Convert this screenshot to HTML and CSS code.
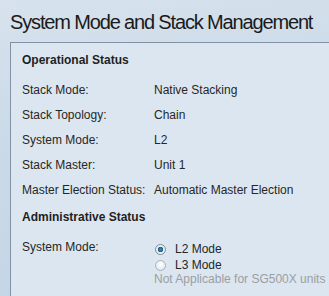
FILE: index.html
```html
<!DOCTYPE html>
<html>
<head>
<meta charset="utf-8">
<link rel="stylesheet" href="styles.css">
</head>
<body>
<div class="page">
  <h1 class="title">System Mode and Stack Management</h1>
  <div class="panel">
    <div class="section-head">Operational Status</div>
    <div class="rows">
      <div class="label">Stack Mode:</div><div class="value">Native Stacking</div>
      <div class="label">Stack Topology:</div><div class="value">Chain</div>
      <div class="label">System Mode:</div><div class="value">L2</div>
      <div class="label">Stack Master:</div><div class="value">Unit 1</div>
      <div class="label">Master Election Status:</div><div class="value">Automatic Master Election</div>
    </div>
    <div class="section-head admin">Administrative Status</div>
    <div class="rows form">
      <div class="label">System Mode:</div>
      <div class="radios">
        <label class="radio-line"><span class="radio checked"></span>L2 Mode</label>
        <label class="radio-line"><span class="radio"></span>L3 Mode</label>
        <div class="note">Not Applicable for SG500X units</div>
      </div>
    </div>
  </div>
</div>
</body>
</html>
```
FILE: styles.css
```css
html, body {
  margin: 0;
  padding: 0;
}
body {
  width: 329px;
  height: 296px;
  overflow: hidden;
  font-family: "Liberation Sans", Arial, sans-serif;
  background: linear-gradient(170deg, #d7e2ed 0%, #cbdae8 40%, #c3d4e5 100%);
}
.page {
  height: 296px;
  overflow: hidden;
}
.title {
  margin: 0;
  height: 42px;
  padding: 11px 0 0 10px;
  box-sizing: border-box;
  font-size: 20px;
  letter-spacing: -1.15px;
  font-weight: normal;
  color: #1a1a1a;
  line-height: 22px;
  white-space: nowrap;
}
.panel {
  margin-left: 10px;
  width: 319px;
  height: 254px;
  background: #dce6f0;
  border: 1px solid #8292a6;
  border-right: none;
  border-bottom: none;
  padding: 5px 0 0 11px;
  box-sizing: border-box;
  font-size: 12px;
  color: #262626;
}
.section-head {
  font-weight: bold;
  line-height: 25px;
  color: #1f1f1f;
  margin-bottom: 5px;
}
.section-head.admin {
  margin-top: 2px;
}
.rows {
  display: grid;
  grid-template-columns: 132px auto;
  grid-auto-rows: 25px;
  line-height: 25px;
  white-space: nowrap;
}
.rows.form {
  grid-auto-rows: auto;
}
.radios {
  display: flex;
  flex-direction: column;
  padding-top: 6px;
}
.radio-line {
  display: flex;
  align-items: center;
  line-height: 16px;
  height: 16px;
  padding-left: 1px;
}
.radio {
  width: 11px;
  height: 11px;
  border-radius: 50%;
  box-sizing: border-box;
  border: 1px solid #a9b3bd;
  background: radial-gradient(circle at 50% 40%, #ffffff 0%, #eef1f4 50%, #d6dbe0 100%);
  margin-right: 9px;
}
.radio.checked {
  border-color: #7f8c99;
  background: radial-gradient(circle, #3c8fbf 0, #1b5e89 2.5px, #e7ecf1 3px, #f5f7f9 100%);
}
.note {
  color: #9a9ea3;
  line-height: 15px;
  margin-top: -1px;
}
```
